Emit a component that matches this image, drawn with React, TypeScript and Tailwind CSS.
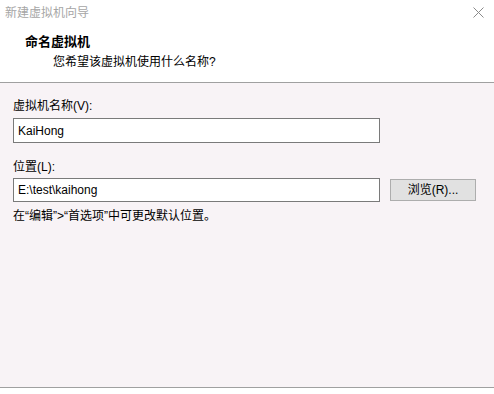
export default function App() {
	return (
		<div
			className="w-[494px] h-[394px] flex flex-col bg-[#f8f3f6] text-[12px] text-black overflow-hidden"
			style={{ fontFamily: '"Liberation Sans", "Noto Sans CJK SC", sans-serif' }}
		>
			{/* title bar + header */}
			<div className="bg-white h-[82px] flex flex-col">
				<div className="h-[26px] flex items-center justify-between pl-[5px] pr-[10px]">
					<span className="text-[#a6a6a6] leading-none">新建虚拟机向导</span>
					<svg width="11" height="11" viewBox="0 0 11 11" className="mb-[2px]">
						<path d="M0.5 0.5 L10.5 10.5 M10.5 0.5 L0.5 10.5" stroke="#8a8a8a" strokeWidth="1" />
					</svg>
				</div>
				<div className="pl-[25px] pt-[8px] font-bold text-[13px] leading-[16px]">命名虚拟机</div>
				<div className="pl-[53px] pt-[4px] leading-[16px]">您希望该虚拟机使用什么名称?</div>
			</div>
			<div className="h-px bg-[#a0a0a0]" />

			{/* body */}
			<div className="flex-1 flex flex-col px-[13px] pt-[15px]">
				<div className="leading-[16px]">虚拟机名称(V):</div>
				<div className="mt-[4px] w-[367px] h-[25px] bg-white border border-[#7a7a7a] flex items-center pl-[4px]">
					KaiHong
				</div>
				<div className="mt-[16px] leading-[16px]">位置(L):</div>
				<div className="mt-[3px] flex items-center gap-[10px]">
					<div className="w-[367px] h-[24px] bg-white border border-[#7a7a7a] flex items-center pl-[4px]">
						E:\test\kaihong
					</div>
					<div className="w-[86px] h-[22px] bg-[#e1e1e1] border border-[#adadad] flex items-center justify-center">
						浏览(R)...
					</div>
				</div>
				<div className="mt-[6px] leading-[16px]">在“编辑”&gt;“首选项”中可更改默认位置。</div>
			</div>

			<div className="h-px bg-[#a0a0a0]" />
			<div className="h-[6px] bg-white" />
		</div>
	);
}
